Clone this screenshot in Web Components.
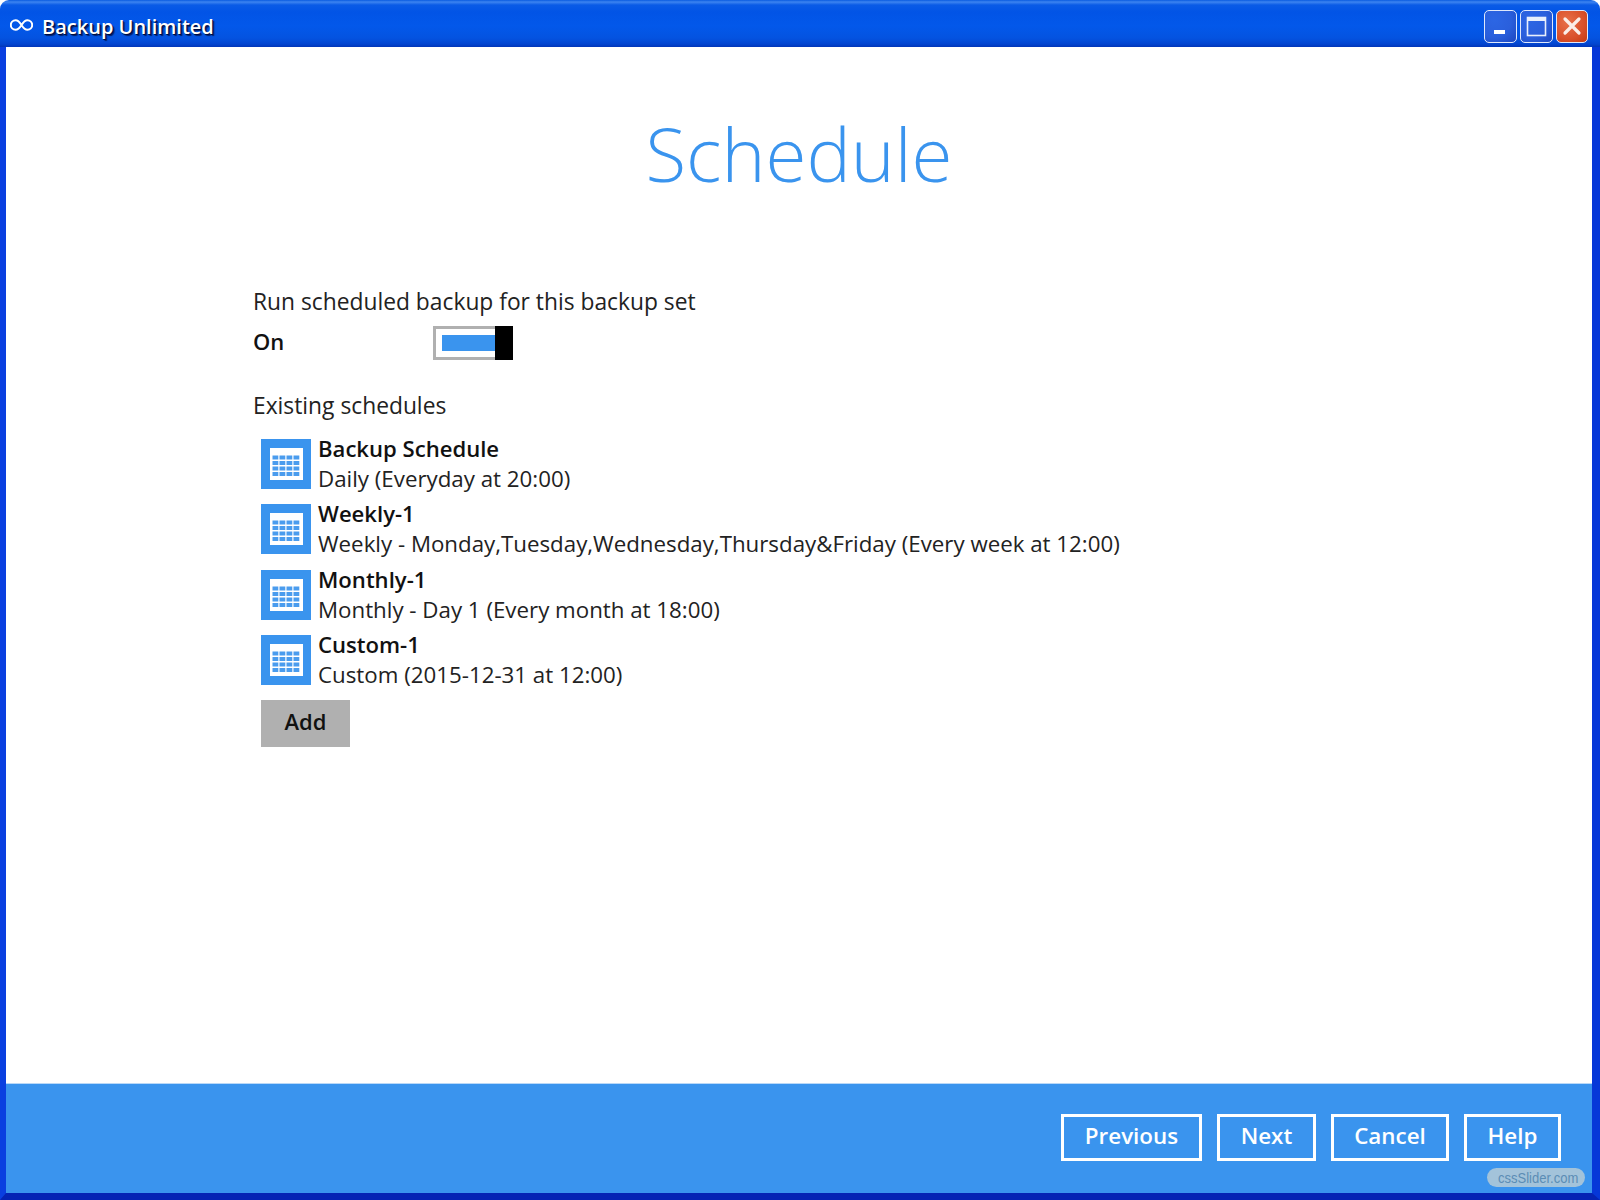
<!DOCTYPE html>
<html>
<head>
<meta charset="utf-8">
<title>Backup Unlimited</title>
<style>
  html, body { margin: 0; padding: 0; background: #fff; }
  body { font-family: "Open Sans", "DejaVu Sans", sans-serif; color: #1a1a1a; }
</style>
</head>
<body>
<xp-window>
  <span slot="title">Backup Unlimited</span>
  <wizard-page heading="Schedule">
    <section-label>Run scheduled backup for this backup set</section-label>
    <toggle-row>On</toggle-row>
    <section-label class="existing">Existing schedules</section-label>
    <schedule-list>
      <schedule-row name="Backup Schedule" detail="Daily (Everyday at 20:00)"></schedule-row>
      <schedule-row name="Weekly-1" detail="Weekly - Monday,Tuesday,Wednesday,Thursday&amp;Friday (Every week at 12:00)"></schedule-row>
      <schedule-row name="Monthly-1" detail="Monthly - Day 1 (Every month at 18:00)"></schedule-row>
      <schedule-row name="Custom-1" detail="Custom (2015-12-31 at 12:00)"></schedule-row>
    </schedule-list>
    <add-button>Add</add-button>
  </wizard-page>
  <wizard-footer slot="footer">
    <footer-button style="width:141px">Previous</footer-button>
    <footer-button style="width:99px">Next</footer-button>
    <footer-button style="width:118px">Cancel</footer-button>
    <footer-button style="width:97px">Help</footer-button>
  </wizard-footer>
</xp-window>

<script>
// small helper so every element below stays a few lines
function define(name, css, html, setup) {
  customElements.define(name, class extends HTMLElement {
    connectedCallback() {
      if (this.shadowRoot) return;
      this.attachShadow({ mode: 'open' });
      this.shadowRoot.innerHTML = `<style>${css}</style>${html(this)}`;
      if (setup) setup(this);
    }
  });
}

define('xp-window', `
  :host { display: flex; flex-direction: column; width: 1600px; height: 1200px; overflow: hidden; background: #fff; }
  .bar {
    flex: none; height: 47px; box-sizing: border-box; display: flex; align-items: center; justify-content: space-between;
    padding: 0 12px 0 10px; border-radius: 9px 9px 0 0;
    background: linear-gradient(180deg, #0a5be0 0, #3d84f0 2px, #0a5be6 5px, #0254e6 12px, #0358ea 26px, #0453e0 38px, #0345d0 44px, #0236b8 47px);
  }
  .left { display: flex; align-items: center; gap: 9px; }
  .title { color: #fff; font: 600 20px/24px "Open Sans", sans-serif; text-shadow: 1px 1px 0 #000c40, 2px 2px 1px #00206a; margin-top: 7px; }
  .logo { margin-top: 2px; }
  .btns { display: flex; gap: 3px; margin-top: 5px; }
  .btn {
    width: 33px; height: 33px; box-sizing: border-box; border: 1.5px solid #dfe8fb; border-radius: 5px;
    background: radial-gradient(circle at 30% 30%, #2c66e4, #2a5fdc 55%, #1c46c0);
    display: flex; align-items: center; justify-content: center;
  }
  .btn.close { width: 32px; background: radial-gradient(circle at 35% 35%, #e8714a, #d9502a 60%, #c43a10); }
  .body { flex: 1; min-height: 0; display: flex; flex-direction: column; box-sizing: border-box;
    border-left: 6px solid #0a3fe0; border-right: 8px solid #0637d8; border-bottom: 7px solid #0524b4; }
  .main { flex: 1; min-height: 0; }
`, () => `
  <div class="bar">
    <div class="left">
      <svg class="logo" width="23" height="12" viewBox="0 0 23 12" fill="none" stroke="#fff" stroke-width="2">
        <path d="M11.5 6C9.5 2.8 7.8 1.2 5.6 1.2A4.8 4.8 0 0 0 5.6 10.8C7.8 10.8 9.5 9.2 11.5 6C13.5 2.8 15.2 1.2 17.4 1.2A4.8 4.8 0 0 1 17.4 10.8C15.2 10.8 13.5 9.2 11.5 6Z"/>
      </svg>
      <div class="title"><slot name="title"></slot></div>
    </div>
    <div class="btns">
      <div class="btn"><svg width="21" height="21" viewBox="0 0 21 21"><rect x="4" y="14" width="11" height="4" fill="#fff"/></svg></div>
      <div class="btn"><svg width="23" height="23" viewBox="0 0 23 23" fill="none"><rect x="2.5" y="2.5" width="18" height="18" stroke="#e8effc" stroke-width="1.6"/><rect x="2" y="2" width="19" height="4" fill="#e8effc"/></svg></div>
      <div class="btn close"><svg width="22" height="22" viewBox="0 0 22 22"><path d="M4 4L18 18M18 4L4 18" stroke="#fbeee8" stroke-width="3.2" stroke-linecap="round"/></svg></div>
    </div>
  </div>
  <div class="body">
    <div class="main"><slot></slot></div>
    <slot name="footer"></slot>
  </div>
`);

define('wizard-page', `
  :host { display: block; padding: 0 0 0 247px; }
  h1 { margin: 0 0 0 -247px; width: 1586px; text-align: center; padding-top: 56px; height: 184px; box-sizing: content-box;
    font: 300 74.5px/100px "Open Sans", sans-serif; color: #3a94ee; }
`, el => `<h1>${el.getAttribute('heading')}</h1><slot></slot>`);

define('section-label', `
  :host { display: block; font-size: 22.8px; line-height: 30px; color: #222; }
  :host(.existing) { margin-top: 30px; }
`, () => `<slot></slot>`);

define('toggle-row', `
  :host { display: flex; align-items: center; height: 36px; margin-top: 8px; font-size: 22px; font-weight: 600; color: #111; }
  .label { width: 180px; margin-bottom: 5px; }
  .track { width: 80px; height: 34px; box-sizing: border-box; border: 3px solid #b0b0b0; padding: 6px; display: flex; position: relative; background: #fff; }
  .fill { width: 53px; height: 16px; background: #3a94ee; }
  .knob { position: absolute; right: -3px; top: -3px; width: 18px; height: 34px; background: #000; }
`, () => `<div class="label"><slot></slot></div><div class="track"><div class="fill"></div><div class="knob"></div></div>`);

define('schedule-list', `
  :host { display: flex; flex-direction: column; gap: 15.4px; margin: 18px 0 0 8px; }
`, () => `<slot></slot>`);

define('schedule-row', `
  :host { display: flex; gap: 8px; height: 50px; }
  .icon { flex: none; width: 50px; height: 50px; background: #3a94ee; display: flex; align-items: center; justify-content: center; }
  .text { display: flex; flex-direction: column; margin: -6px 0 0 -1px; }
  .name { font-size: 22.1px; line-height: 30px; font-weight: 600; color: #111; }
  .detail { font-size: 22.3px; line-height: 30px; margin-top: 1px; color: #222; white-space: nowrap; }
`, el => `
  <div class="icon">
    <svg width="33" height="32" viewBox="0 0 33 32">
      <rect width="33" height="32" fill="#fff"/>
      <g fill="#4a9cee">
        ${[7.5, 13, 18.5, 24].map(y => [2.5, 9.5, 16.5, 23.5].map(x => `<rect x="${x}" y="${y}" width="5.8" height="4"/>`).join('')).join('')}
      </g>
    </svg>
  </div>
  <div class="text"><div class="name">${el.getAttribute('name')}</div><div class="detail">${el.getAttribute('detail').replace('&', '&amp;')}</div></div>
`);

define('add-button', `
  :host { display: flex; align-items: center; justify-content: center; width: 89px; height: 47px; box-sizing: border-box; padding-bottom: 5px; margin: 15px 0 0 8px;
    background: #b0b0b0; font-size: 22px; font-weight: 600; color: #111; }
`, () => `<slot></slot>`);

define('wizard-footer', `
  :host { display: flex; flex: none; height: 110px; box-sizing: border-box; background: #3a94ee; border-top: 1px solid #b9d8f8;
    justify-content: flex-end; align-items: flex-start; gap: 15px; padding: 30px 31px 0 0; position: relative; }
  .badge { position: absolute; right: 7px; bottom: 6px; width: 98px; height: 19px; border-radius: 10px; background: #a3c3da;
    display: flex; align-items: center; gap: 5px; padding-left: 6px; box-sizing: border-box; color: #5b8db5; overflow: hidden; }
  .badge span { display: inline-block; font: 15.5px/19px "Liberation Sans", sans-serif; transform: scaleX(.84); transform-origin: left center; white-space: nowrap; }
`, () => `<slot></slot>
  <div class="badge">
    <svg width="9" height="12" viewBox="0 0 9 12" fill="none" stroke="#2c5f92" stroke-width="2.4"><path d="M2 1L7 6L2 11"/></svg>
    <span>cssSlider.com</span>
  </div>`);

define('footer-button', `
  :host { display: flex; align-items: center; justify-content: center; height: 47px; box-sizing: border-box; padding-bottom: 5px;
    border: 3px solid #fff; color: #fff; font-size: 22.4px; font-weight: 600; }
`, () => `<slot></slot>`);
</script>
</body>
</html>
